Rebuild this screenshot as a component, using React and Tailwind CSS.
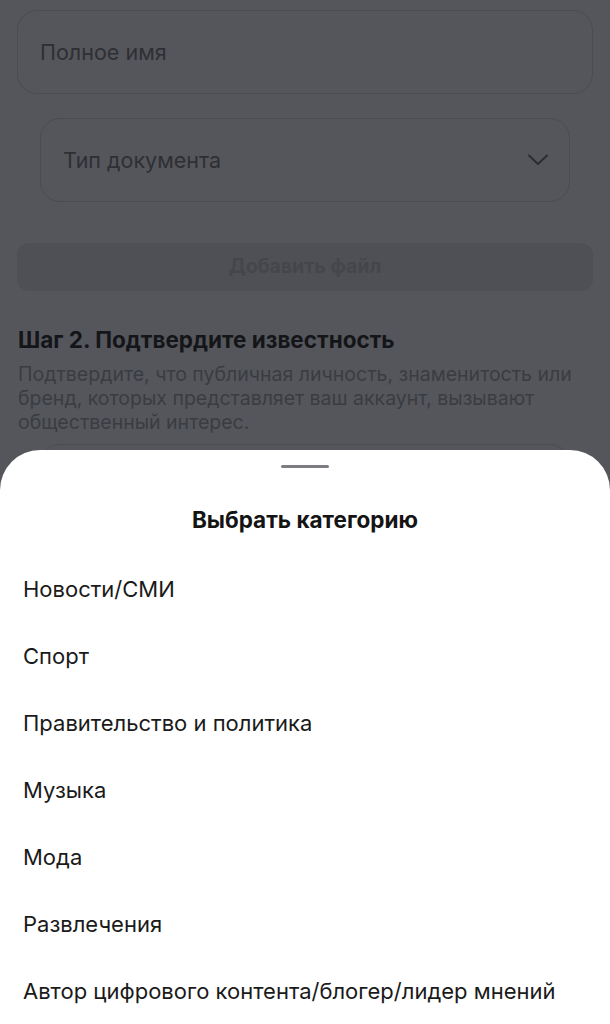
const font = { fontFamily: 'Inter, "Noto Sans", sans-serif' }

const categories = [
  'Новости/СМИ',
  'Спорт',
  'Правительство и политика',
  'Музыка',
  'Мода',
  'Развлечения',
  'Автор цифрового контента/блогер/лидер мнений',
]

function Backdrop() {
  return (
    <div className="px-[17px] pt-[10px]">
      <div className="h-[84px] rounded-[20px] border border-[#4b4c51] flex items-center px-[22px]">
        <span className="text-[21.5px] text-[#2e2f33]">Полное имя</span>
      </div>

      <div className="mx-[23px] mt-[24px] h-[84px] rounded-[20px] border border-[#4b4c51] flex items-center justify-between px-[22px]">
        <span className="text-[21.5px] text-[#2e2f33]">Тип документа</span>
        <svg width="22" height="14" viewBox="0 0 22 14" fill="none" className="mr-[-2px]">
          <path d="M2 2.5l9 8.5 9-8.5" stroke="#2c2d31" strokeWidth="2" strokeLinecap="round" strokeLinejoin="round" />
        </svg>
      </div>

      <div className="mt-[41px] h-[48px] rounded-[12px] bg-[#4f5055] flex items-center justify-center">
        <span className="text-[19.5px] font-bold text-[#44464b]">Добавить файл</span>
      </div>

      <h2 className="mt-[36px] pl-[1px] text-[22.5px] font-bold text-[#141519] leading-[26px]">
        Шаг 2. Подтвердите известность
      </h2>
      <p className="mt-[9px] pl-[1px] pr-[10px] text-[19.5px] leading-[24px] text-[#3a3c41]">
        Подтвердите, что публичная личность, знаменитость или бренд, которых представляет ваш аккаунт, вызывают общественный интерес.
      </p>

      <div className="mx-[23px] mt-[10px] h-[84px] rounded-[20px] border border-[#4b4c51]" />
    </div>
  )
}

function Sheet() {
  return (
    <div className="absolute left-0 right-0 top-[450px] bottom-0 bg-white rounded-t-[40px]">
      <div className="flex justify-center pt-[15px]">
        <div className="w-[48px] h-[3px] rounded-full bg-[#7b7d82]" />
      </div>
      <h3 className="mt-[39px] text-center text-[22.5px] font-bold text-[#141414] leading-[26px]">
        Выбрать категорию
      </h3>
      <ul className="mt-[23px] px-[23px]">
        {categories.map(c => (
          <li key={c} className="h-[67px] flex items-center text-[22px] text-[#1a1a1a] whitespace-nowrap">
            {c}
          </li>
        ))}
      </ul>
    </div>
  )
}

export default function App() {
  return (
    <div className="relative h-[1024px] w-full overflow-hidden bg-[#55565b]" style={font}>
      <Backdrop />
      <Sheet />
    </div>
  )
}
